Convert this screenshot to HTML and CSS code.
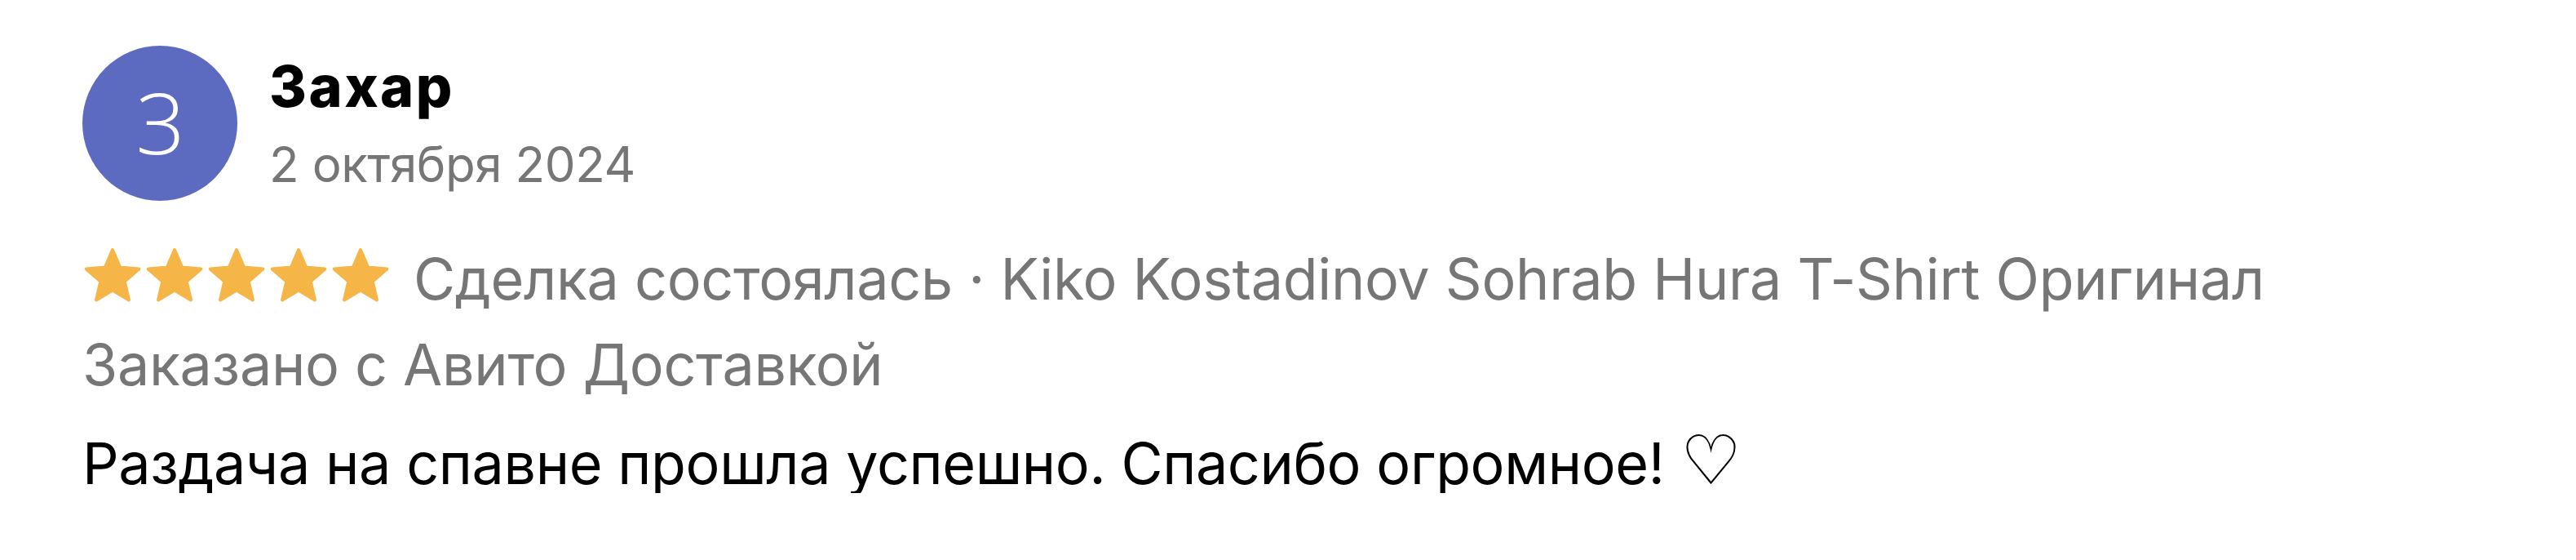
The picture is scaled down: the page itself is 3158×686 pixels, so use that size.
FILE: index.html
```html
<!DOCTYPE html>
<html lang="ru">
<head>
    <meta charset="UTF-8">
    <meta name="viewport" content="width=device-width, initial-scale=1.0">
    <title>Отзыв — Захар</title>
    <link rel="stylesheet" href="styles.css">
</head>
<body>
    <div class="review">
        <!-- автор отзыва -->
        <div class="review-head">
            <div class="avatar">З</div>
            <div class="author">
                <div class="author-name">Захар</div>
                <div class="review-date">2 октября 2024</div>
            </div>
        </div>

        <!-- оценка и сделка -->
        <div class="review-meta">
            <div class="stars">
                <svg class="star" viewBox="0 0 72 72"><path d="M37 4L46.11 25.46L69.34 27.49L51.74 42.79L56.99 65.51L37 53.5L17.01 65.51L22.26 42.79L4.66 27.49L27.89 25.46Z"/></svg>
                <svg class="star" viewBox="0 0 72 72"><path d="M37 4L46.11 25.46L69.34 27.49L51.74 42.79L56.99 65.51L37 53.5L17.01 65.51L22.26 42.79L4.66 27.49L27.89 25.46Z"/></svg>
                <svg class="star" viewBox="0 0 72 72"><path d="M37 4L46.11 25.46L69.34 27.49L51.74 42.79L56.99 65.51L37 53.5L17.01 65.51L22.26 42.79L4.66 27.49L27.89 25.46Z"/></svg>
                <svg class="star" viewBox="0 0 72 72"><path d="M37 4L46.11 25.46L69.34 27.49L51.74 42.79L56.99 65.51L37 53.5L17.01 65.51L22.26 42.79L4.66 27.49L27.89 25.46Z"/></svg>
                <svg class="star" viewBox="0 0 72 72"><path d="M37 4L46.11 25.46L69.34 27.49L51.74 42.79L56.99 65.51L37 53.5L17.01 65.51L22.26 42.79L4.66 27.49L27.89 25.46Z"/></svg>
            </div>
            <span class="deal">Сделка состоялась · Kiko Kostadinov Sohrab Hura T-Shirt Оригинал</span>
        </div>
        <div class="delivery">Заказано с Авито Доставкой</div>

        <!-- текст отзыва -->
        <p class="review-text">Раздача на спавне прошла успешно. Спасибо огромное! <span class="heart">♡</span></p>
    </div>
</body>
</html>
```
FILE: styles.css
```css
* {
    margin: 0;
    padding: 0;
    box-sizing: border-box;
}

body {
    background-color: #fff;
    color: #000;
    font-family: Inter, "Noto Sans", sans-serif;
}

.review {
    padding: 56px 101px 0;
    white-space: nowrap;
}

/* автор */
.review-head {
    display: flex;
    gap: 39px;
}

.avatar {
    display: flex;
    align-items: center;
    justify-content: center;
    flex-shrink: 0;
    width: 190px;
    height: 190px;
    padding-bottom: 4px;
    border-radius: 50%;
    background-color: #5c6bc0;
    color: #fff;
    font-family: "Open Sans", sans-serif;
    font-weight: 300;
    font-size: 104px;
    line-height: 1;
}

.author {
    display: flex;
    flex-direction: column;
    padding-top: 10px;
}

.author-name {
    font-size: 70px;
    font-weight: 800;
    line-height: 80px;
    letter-spacing: 2.5px;
}

.review-date {
    margin-top: 23px;
    color: #767676;
    font-size: 60px;
    line-height: 64px;
    letter-spacing: -0.4px;
}

/* оценка */
.review-meta {
    display: flex;
    align-items: flex-start;
    gap: 30px;
    margin-top: 56px;
}

.stars {
    display: flex;
    gap: 4px;
}

.star {
    width: 72px;
    height: 72px;
    fill: #f5b547;
    stroke: #f5b547;
    stroke-width: 4;
    stroke-linejoin: round;
}

.deal,
.delivery {
    color: #767676;
    font-size: 70px;
    line-height: 72px;
    letter-spacing: -0.3px;
}

.deal {
    margin-top: 4px;
}

.delivery {
    margin-top: 33px;
}

/* текст */
.review-text {
    margin-top: 49px;
    font-size: 70px;
    line-height: 72px;
    letter-spacing: -0.4px;
}

.heart {
    font-family: "DejaVu Sans", sans-serif;
    font-size: 84px;
    line-height: 0;
    letter-spacing: 0;
}
```
